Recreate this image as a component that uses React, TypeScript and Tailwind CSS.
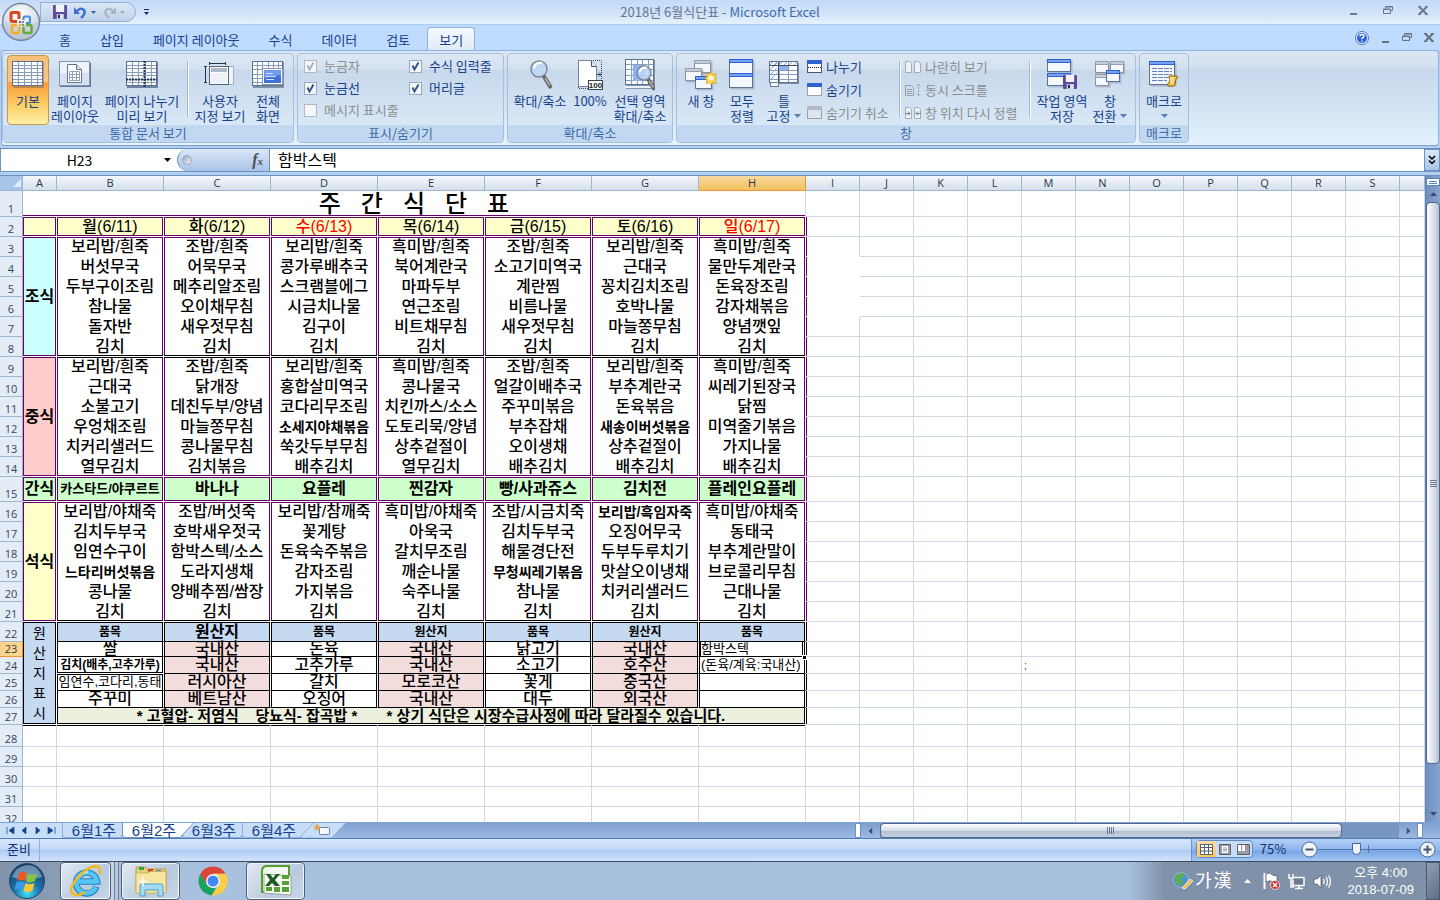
import { useState } from "react";
import type { ReactNode } from "react";

const TABS = ["홈", "삽입", "페이지 레이아웃", "수식", "데이터", "검토", "보기"];
const MEAL_COLUMNS = ["B", "C", "D", "E", "F", "G", "H"];
const EMPTY_COLUMNS = ["I", "J", "K", "L", "M", "N", "O", "P", "Q", "R", "S", ""];
const DAYS = ["월(6/11)", "화(6/12)", "수(6/13)", "목(6/14)", "금(6/15)", "토(6/16)", "일(6/17)"];
const SHEETS = ["6월1주", "6월2주", "6월3주", "6월4주"];

const BREAKFAST = [
  ["보리밥/흰죽", "조밥/흰죽", "보리밥/흰죽", "흑미밥/흰죽", "조밥/흰죽", "보리밥/흰죽", "흑미밥/흰죽"],
  ["버섯무국", "어묵무국", "콩가루배추국", "북어계란국", "소고기미역국", "근대국", "물만두계란국"],
  ["두부구이조림", "메추리알조림", "스크램블에그", "마파두부", "계란찜", "꽁치김치조림", "돈육장조림"],
  ["참나물", "오이채무침", "시금치나물", "연근조림", "비름나물", "호박나물", "감자채볶음"],
  ["돌자반", "새우젓무침", "김구이", "비트채무침", "새우젓무침", "마늘쫑무침", "양념깻잎"],
  ["김치", "김치", "김치", "김치", "김치", "김치", "김치"],
];

const LUNCH = [
  ["보리밥/흰죽", "조밥/흰죽", "보리밥/흰죽", "흑미밥/흰죽", "조밥/흰죽", "보리밥/흰죽", "흑미밥/흰죽"],
  ["근대국", "닭개장", "홍합살미역국", "콩나물국", "얼갈이배추국", "부추계란국", "씨레기된장국"],
  ["소불고기", "데친두부/양념", "코다리무조림", "치킨까스/소스", "주꾸미볶음", "돈육볶음", "닭찜"],
  ["우엉채조림", "마늘쫑무침", "소세지야채볶음", "도토리묵/양념", "부추잡채", "새송이버섯볶음", "미역줄기볶음"],
  ["치커리샐러드", "콩나물무침", "쑥갓두부무침", "상추겉절이", "오이생채", "상추겉절이", "가지나물"],
  ["열무김치", "김치볶음", "배추김치", "열무김치", "배추김치", "배추김치", "배추김치"],
];

const SNACK = ["카스타드/야쿠르트", "바나나", "요플레", "찐감자", "빵/사과쥬스", "김치전", "플레인요플레"];

const DINNER = [
  ["보리밥/야채죽", "조밥/버섯죽", "보리밥/참깨죽", "흑미밥/야채죽", "조밥/시금치죽", "보리밥/흑임자죽", "흑미밥/야채죽"],
  ["김치두부국", "호박새우젓국", "꽃게탕", "아욱국", "김치두부국", "오징어무국", "동태국"],
  ["임연수구이", "함박스텍/소스", "돈육숙주볶음", "갈치무조림", "해물경단전", "두부두루치기", "부추계란말이"],
  ["느타리버섯볶음", "도라지생채", "감자조림", "깨순나물", "무청씨레기볶음", "맛살오이냉채", "브로콜리무침"],
  ["콩나물", "양배추찜/쌈장", "가지볶음", "숙주나물", "참나물", "치커리샐러드", "근대나물"],
  ["김치", "김치", "김치", "김치", "김치", "김치", "김치"],
];

const ORIGIN_HEAD = ["품목", "원산지", "품목", "원산지", "품목", "원산지", "품목"];
const ORIGIN = [
  ["쌀", "국내산", "돈육", "국내산", "닭고기", "국내산", "함박스텍"],
  ["김치(배추,고추가루)", "국내산", "고추가루", "국내산", "소고기", "호주산", "(돈육/계육:국내산)"],
  ["임연수,코다리,동태", "러시아산", "갈치", "모로코산", "꽃게", "중국산", ""],
  ["주꾸미", "베트남산", "오징어", "국내산", "대두", "외국산", ""],
];

// long names are set smaller so that they stay inside the column
const TEXT_SIZE: Record<string, string> = {
  "카스타드/야쿠르트": "text-[13px] font-bold",
  "소세지야채볶음": "text-sm font-bold",
  "새송이버섯볶음": "text-sm font-bold",
  "느타리버섯볶음": "text-sm font-bold",
  "무청씨레기볶음": "text-sm font-bold",
  "보리밥/흑임자죽": "text-sm font-bold",
  "김치(배추,고추가루)": "text-xs font-bold",
  "임연수,코다리,동태": "text-[13px]",
};

const FRAME = {
  sides: "shadow-[inset_1px_0_0_0_#660066,inset_-1px_0_0_0_#660066]",
  top: "shadow-[inset_1px_0_0_0_#660066,inset_-1px_0_0_0_#660066,inset_0_1px_0_0_#660066]",
  bottom: "shadow-[inset_1px_0_0_0_#660066,inset_-1px_0_0_0_#660066,inset_0_-1px_0_0_#660066]",
  topBlack: "shadow-[inset_0_1px_0_0_#000000,inset_1px_0_0_0_#660066,inset_-1px_0_0_0_#660066]",
  bottomBlack: "shadow-[inset_0_-1px_0_0_#000000,inset_1px_0_0_0_#660066,inset_-1px_0_0_0_#660066]",
  box: "shadow-[inset_0_0_0_1px_#660066]",
  boxBlack: "shadow-[inset_0_0_0_1px_#000000]",
  sidesBlack: "shadow-[inset_1px_0_0_0_#000000,inset_-1px_0_0_0_#000000]",
  sidesTopBlack: "shadow-[inset_1px_0_0_0_#000000,inset_-1px_0_0_0_#000000,inset_0_1px_0_0_#000000]",
  sidesBottomBlack: "shadow-[inset_1px_0_0_0_#000000,inset_-1px_0_0_0_#000000,inset_0_-1px_0_0_#000000]",
};

const CELL = "border-r border-white p-0 text-center align-middle whitespace-nowrap leading-[14px]";

/* ---------- icons ---------- */

function Caret({ className = "" }: { className?: string }) {
  return (
    <svg width="7" height="4" viewBox="0 0 7 4" className={className}>
      <path d="M0 0h7L3.5 4z" fill="currentColor" />
    </svg>
  );
}

function WindowShape({ x, y, w, h, gray = false }: { x: number; y: number; w: number; h: number; gray?: boolean }) {
  return (
    <g>
      <rect x={x + 1.5} y={y + 1.5} width={w} height={h} fill="#8fa3bd" opacity="0.6" />
      <rect x={x + 0.5} y={y + 0.5} width={w - 1} height={h - 1} fill="#f4f7fc" stroke={gray ? "#8a8f99" : "#5d7394"} />
      <rect x={x} y={y} width={w} height="4" fill={gray ? "#9aa0ab" : "#2f62cf"} />
      <rect x={x + 1} y={y + 1} width={w - 2} height="2" fill={gray ? "#c8ccd3" : "#7ba2f2"} />
    </g>
  );
}

function GridShape({ x, y, w, h, cols, rows }: { x: number; y: number; w: number; h: number; cols: number; rows: number }) {
  const vertical = Array.from({ length: cols - 1 }, (_, i) => x + Math.round(((i + 1) * w) / cols) + 0.5);
  const horizontal = Array.from({ length: rows - 1 }, (_, i) => y + Math.round(((i + 1) * h) / rows) + 0.5);
  return (
    <g stroke="#8b9cb8">
      <rect x={x + 0.5} y={y + 0.5} width={w - 1} height={h - 1} fill="#fafcff" stroke="#5f7190" />
      {vertical.map((v) => (
        <path key={`v${v}`} d={`M${v} ${y + 1}V${y + h - 1}`} />
      ))}
      {horizontal.map((v) => (
        <path key={`h${v}`} d={`M${x + 1} ${v}H${x + w - 1}`} />
      ))}
    </g>
  );
}

function Magnifier({ x, y, r }: { x: number; y: number; r: number }) {
  return (
    <g>
      <path d={`M${x + r * 0.6} ${y + r * 0.9}l${r * 0.8} ${r * 1.3}`} stroke="#6b6661" strokeWidth="4" strokeLinecap="round" />
      <path d={`M${x + r * 0.8} ${y + r * 1.2}l${r * 0.5} ${r * 0.8}`} stroke="#b9b4ae" strokeWidth="1.5" strokeLinecap="round" />
      <circle cx={x} cy={y} r={r} fill="#bcd6f3" fillOpacity="0.85" stroke="#7c8795" strokeWidth="1.5" />
      <path d={`M${x - r * 0.6} ${y - r * 0.1}a${r * 0.7} ${r * 0.7} 0 0 1 ${r} -${r * 0.6}`} stroke="#fff" strokeWidth="2" fill="none" />
    </g>
  );
}

function Floppy({ x, y, s }: { x: number; y: number; s: number }) {
  return (
    <g>
      <rect x={x} y={y} width={s} height={s} rx="1" fill="#5b4a9e" />
      <rect x={x + s * 0.2} y={y} width={s * 0.6} height={s * 0.5} fill="#f3f4fa" />
      <rect x={x + s * 0.27} y={y + s * 0.65} width={s * 0.5} height={s * 0.35} fill="#e2e2ee" />
      <rect x={x + s * 0.35} y={y + s * 0.7} width={s * 0.15} height={s * 0.25} fill="#2d2a55" />
    </g>
  );
}

function NormalViewIcon() {
  return (
    <svg width="32" height="27" viewBox="0 0 32 27">
      <rect x="1" y="1" width="31" height="26" fill="#7e6a55" opacity="0.5" />
      <GridShape x={0} y={0} w={31} h={25} cols={5} rows={7} />
    </svg>
  );
}

function PageLayoutIcon() {
  return (
    <svg width="32" height="27" viewBox="0 0 32 27">
      <rect x="1" y="2" width="31" height="24" fill="#5f7896" />
      <rect x="0.5" y="0.5" width="30" height="24" fill="#eef3fa" stroke="#8296b4" />
      <rect x="1" y="12" width="29" height="12" fill="#d7e0ee" />
      <path d="M8.5 3.5h9l5 5v13h-14z" fill="#fff" stroke="#66758c" />
      <path d="M17.5 3.5v5h5" fill="#dce4ef" stroke="#66758c" />
      <path d="M10.5 10.5h10v9h-10zM10.5 13.5h10M10.5 16.5h10M13.5 10.5v9M17.5 10.5v9" fill="none" stroke="#93a2b8" />
    </svg>
  );
}

function PageBreakIcon() {
  return (
    <svg width="32" height="27" viewBox="0 0 32 27">
      <rect x="1" y="1" width="31" height="26" fill="#6e83a1" />
      <GridShape x={0} y={0} w={31} h={25} cols={5} rows={7} />
      <path d="M18.5 0v26M0 18.5h31" stroke="#23344f" strokeWidth="2" strokeDasharray="2 1" />
    </svg>
  );
}

function CustomViewIcon() {
  return (
    <svg width="32" height="27" viewBox="0 0 32 27">
      <rect x="20.5" y="5.5" width="9" height="18" fill="#f1f4f9" stroke="#9fb0c8" />
      <rect x="5.5" y="5.5" width="19" height="18" fill="#fff" stroke="#4f627e" />
      <rect x="7" y="7" width="16" height="4" fill="#aeb9ca" />
      <path d="M7 12h16v10H7z" fill="#edf1f7" />
      <path d="M5 2.500h17M5.500 1v3M21.500 1v3M1.500 5v17M0 5.500h3M0 21.500h3" stroke="#23344f" />
    </svg>
  );
}

function FullScreenIcon() {
  return (
    <svg width="32" height="27" viewBox="0 0 32 27">
      <rect x="1" y="1" width="31" height="26" fill="#7d8fab" />
      <GridShape x={0} y={0} w={31} h={25} cols={6} rows={6} />
      <rect x="10.5" y="7.5" width="20" height="16" fill="#fff" stroke="#8598b6" />
      <rect x="12" y="9" width="17" height="13" fill="#3f71d8" />
      <path d="M12 9h17v5l-17 3z" fill="#6f9aee" />
      <path d="M14 12.500h7M14 15.500h10M14 18.500h8" stroke="#cfe0ff" />
    </svg>
  );
}

function ZoomIcon() {
  return (
    <svg width="26" height="32" viewBox="0 0 26 32" fill="none">
      <Magnifier x={12} y={10} r={8} />
    </svg>
  );
}

function HundredIcon() {
  return (
    <svg width="28" height="32" viewBox="0 0 28 32">
      <path d="M2.500 1.500h13l5 6v20h-18z" fill="#fff" stroke="#74839a" />
      <path d="M15.500 1.500v6h5" fill="#e1e8f2" stroke="#44546c" />
      <path d="M17 1.500h8.500V22M2.500 28v1.500H12" fill="none" stroke="#33435a" strokeDasharray="1 1" />
      <path d="M21 15.500h4M23 13.500l2 2-2 2" fill="none" stroke="#33435a" />
      <rect x="12.5" y="21.5" width="14" height="9" fill="#fff" stroke="#33435a" />
      <text x="19.5" y="29" fontSize="8" fontWeight="bold" textAnchor="middle" fontFamily="Liberation Sans, sans-serif" fill="#222">
        100
      </text>
    </svg>
  );
}

function ZoomSelectionIcon() {
  return (
    <svg width="30" height="32" viewBox="0 0 30 32" fill="none">
      <rect x="1" y="1" width="29" height="29" fill="#8295b2" />
      <GridShape x={0} y={0} w={29} h={26} cols={5} rows={5} />
      <rect x="8" y="6" width="12" height="16" fill="#8fb0f3" />
      <path d="M0 27h29v2H0z" fill="#eef2f8" />
      <Magnifier x={19} y={14} r={7} />
    </svg>
  );
}

function NewWindowIcon() {
  return (
    <svg width="32" height="32" viewBox="0 0 32 32">
      <WindowShape x={9} y={1} w={17} h={13} gray />
      <WindowShape x={0} y={9} w={17} h={13} gray />
      <WindowShape x={10} y={17} w={17} h={13} />
      <path d="M26 12l1.500 4 4-1.500-1.500 4 2 1-2 1.500 1.500 3.500-4-1-1.500 2.500-1.500-2.500-3.500 1 1-3.500-2.500-1.500 2.500-1.500-1-3.500 3.500 1z" fill="#ffd84a" stroke="#dc9a12" strokeWidth="0.7" />
      <circle cx="26" cy="19" r="2.5" fill="#fffbe0" />
    </svg>
  );
}

function ArrangeIcon() {
  return (
    <svg width="26" height="31" viewBox="0 0 26 31">
      <WindowShape x={0} y={0} w={24} h={15} />
      <WindowShape x={0} y={14} w={24} h={15} />
    </svg>
  );
}

function FreezeIcon() {
  return (
    <svg width="30" height="27" viewBox="0 0 30 27">
      <rect x="2" y="2" width="28" height="21" fill="#7c8da8" />
      <GridShape x={0} y={0} w={29} h={22} cols={3} rows={5} />
      <path d="M1 4l3-3M5 4l3-3M10 4l3-3M15 4l3-3M20 4l3-3M25 4l3-3M1 9l7-7M1 14l7-7M1 19l7-7" stroke="#8aaaf0" />
      <rect x="10" y="5" width="9" height="4" fill="#8fb0f3" />
      <path d="M9.500 1v24M1 4.500h28" stroke="#3d4d66" />
      <rect x="1.5" y="21.5" width="8" height="4" fill="#f2f5fa" stroke="#6d7e98" />
    </svg>
  );
}

function SaveWorkspaceIcon() {
  return (
    <svg width="31" height="32" viewBox="0 0 31 32">
      <WindowShape x={0} y={0} w={24} h={13} />
      <WindowShape x={0} y={14} w={24} h={13} />
      <Floppy x={16} y={16} s={14} />
    </svg>
  );
}

function SwitchWindowsIcon() {
  return (
    <svg width="30" height="27" viewBox="0 0 30 27">
      <WindowShape x={0} y={0} w={14} h={12} gray />
      <WindowShape x={15} y={0} w={14} h={12} gray />
      <WindowShape x={0} y={13} w={14} h={12} gray />
      <WindowShape x={11} y={9} w={14} h={12} />
    </svg>
  );
}

function MacroIcon() {
  return (
    <svg width="30" height="27" viewBox="0 0 30 27">
      <WindowShape x={0} y={0} w={26} h={24} />
      <path d="M3 7.500h20M3 10.500h20M3 13.500h20M3 16.500h16M3 19.500h15" stroke="#5e7fb6" strokeDasharray="5 1" />
      <path d="M20 15h8q2 2-1 3l-1 6q-1 2-7 1-2-2 1-3l1-4q-2-1-1-3z" fill="#e9b93f" stroke="#94660f" />
      <path d="M21 16h5l-2 7h-3z" fill="#f9dd85" />
    </svg>
  );
}

function SmallWindowIcon({ kind }: { kind: string }) {
  if (kind === "compare" || kind === "scroll" || kind === "reset") {
    return (
      <svg width="16" height="14" viewBox="0 0 16 14" className="shrink-0">
        {kind !== "scroll" && (
          <g fill="#eef1f6" stroke="#a3acba">
            <path d="M.5 1.500h4l2 2v9h-6zM9.500 1.500h4l2 2v9h-6z" />
            {kind === "reset" && <path d="M0 7.500h5M3 5.500l2 2-2 2M16 7.500h-5M13 5.500l-2 2 2 2" stroke="#747d8b" fill="none" />}
          </g>
        )}
        {kind === "scroll" && (
          <g fill="none" stroke="#98a1af">
            <path d="M.5 2.500h6l2 2v8h-8zM2 6.500h5M2 8.500h5M2 10.500h5" />
            <path d="M13.500 1v12M11.500 3l2-2 2 2M11.500 11l2 2 2-2" strokeDasharray="2 1" />
          </g>
        )}
      </svg>
    );
  }
  return (
    <svg width="15" height="13" viewBox="0 0 15 13" className="shrink-0">
      <rect x="0.5" y="0.5" width="14" height="12" fill="#fff" stroke={kind === "unhide" ? "#98a1af" : "#46597a"} strokeDasharray={kind === "hide" ? "1 1" : undefined} />
      <rect width="15" height="4" fill={kind === "unhide" ? "#b4bac5" : "#2f62cf"} />
      {kind === "split" && <path d="M1 7.500h13" stroke="#222" strokeDasharray="1 1" />}
      {kind === "unhide" && <rect x="1" y="4" width="13" height="8" fill="#dfe5ee" />}
    </svg>
  );
}

function MinimizeIcon() {
  return (
    <svg width="9" height="12" viewBox="0 0 9 12">
      <path d="M1 9h7v2H1z" fill="currentColor" />
    </svg>
  );
}

function RestoreIcon() {
  return (
    <svg width="10" height="9" viewBox="0 0 10 9" fill="none" stroke="currentColor">
      <path d="M2.500 2.500v-2h7v4h-2M2 1h8" />
      <path d="M.5 3h7v4.500h-7zM0 3.500h8" />
    </svg>
  );
}

function CloseIcon() {
  return (
    <svg width="10" height="9" viewBox="0 0 10 9" fill="none" stroke="currentColor" strokeWidth="2">
      <path d="M1 .5l8 8M9 .5l-8 8" />
      <path d="M0 .5h3M7 .5h3M0 8.500h3M7 8.500h3" strokeWidth="1" />
    </svg>
  );
}

function OfficeLogo() {
  return (
    <svg width="40" height="40" viewBox="0 0 40 40" fill="none">
      <defs>
        <radialGradient id="orb" cx="0.5" cy="0.3" r="0.75">
          <stop offset="0" stopColor="#ffffff" />
          <stop offset="0.55" stopColor="#dbe1ea" />
          <stop offset="1" stopColor="#a5b2c6" />
        </radialGradient>
      </defs>
      <circle cx="20" cy="20" r="18.5" fill="url(#orb)" stroke="#75879f" strokeWidth="1.5" />
      <path d="M3 20q17 5 34 0q-2 15-17 16.500Q5 35 3 20z" fill="#bcc9db" opacity="0.6" />
      <path d="M18 17v-5q0-1.500-1.500-1.500h-5q-1.500 0-1.500 1.500v6q0 1.500 1.500 1.500H16" stroke="#d9481c" strokeWidth="3" />
      <path d="M22.500 18v-2q0-1.500 1.500-1.500h3.500q1.500 0 1.500 1.500v3.500q0 1.500-1.500 1.500H25" stroke="#4a93d9" strokeWidth="2.2" />
      <path d="M18 25v4.500q0 1.500-1.500 1.500h-4q-1.500 0-1.500-1.500v-5q0-1.500 1.500-1.500H16" stroke="#f3b01f" strokeWidth="2.5" />
      <path d="M22.500 25v4.500q0 1.500 1.500 1.500h5q1.500 0 1.500-1.500v-5q0-1.500-1.500-1.500H25" stroke="#66a83a" strokeWidth="2.5" />
      <path d="M18 19h2v2h-2z" fill="#d9481c" />
      <path d="M21 19h2v2h-2z" fill="#4a93d9" />
      <path d="M18 22h2v2h-2z" fill="#f3b01f" />
      <path d="M21 22h2v2h-2z" fill="#66a83a" />
    </svg>
  );
}

/* ---------- ribbon ---------- */

function RibbonGroup({ label, children }: { label: string; children: ReactNode }) {
  return (
    <section className="flex h-[90px] shrink-0 flex-col overflow-hidden rounded-sm border border-[#a5c0dc] bg-[linear-gradient(#dce7f4_0,#d5e1f0_15px,#c8d8ec_16px,#d9e8f6_72px)]">
      <div className="flex flex-1 items-start px-1 pt-px">{children}</div>
      <h2 className="h-[17px] bg-[#c1d8f0] text-center text-[13px] leading-4 text-[#3e6aaa]">{label}</h2>
    </section>
  );
}

interface BigButtonProps {
  icon: ReactNode;
  lines: string[];
  width: string;
  active?: boolean;
  caret?: boolean;
}

function BigButton({ icon, lines, width, active = false, caret = false }: BigButtonProps) {
  return (
    <button
      type="button"
      className={`flex h-[70px] shrink-0 flex-col items-center rounded-sm border text-[13px] leading-[15px] whitespace-nowrap text-[#15428b] ${width} ${
        active
          ? "border-[#c29a4b] bg-[linear-gradient(#f6c078_0,#fbc48a_25px,#fd9d3b_27px,#fdd067_50px,#fff0a8_100%)]"
          : "border-transparent"
      }`}
    >
      <span className="flex h-[37px] items-center justify-center">{icon}</span>
      {lines.map((line, i) => (
        <span key={line} className="flex h-[15px] items-center gap-1">
          {line}
          {caret && i === lines.length - 1 && <Caret className="text-[#5b7fb8]" />}
        </span>
      ))}
    </button>
  );
}

function Separator() {
  return <div className="mx-1 mt-1.5 h-14 w-0.5 shrink-0 border-l border-[#9fb8d6] bg-white" />;
}

function RibbonCheck({ label, checked = false, disabled = false }: { label: string; checked?: boolean; disabled?: boolean }) {
  const [on, setOn] = useState(checked);
  return (
    <label className={`flex items-center gap-[7px] text-[13px] whitespace-nowrap ${disabled ? "text-[#8d8d8d]" : "text-[#15428b]"}`}>
      <span className="relative flex">
        <input
          type="checkbox"
          checked={on}
          disabled={disabled}
          onChange={() => setOn(!on)}
          className={`h-[13px] w-[13px] appearance-none border bg-[#f4f6f9] ${disabled ? "border-[#b1b8c2]" : "border-[#98a9c2]"}`}
        />
        {on && (
          <svg width="13" height="13" viewBox="0 0 13 13" className="pointer-events-none absolute inset-0">
            <path d="M3.500 5.500l2 4 4-7" fill="none" strokeWidth="2" stroke={disabled ? "#a9b3c2" : "#33558f"} />
          </svg>
        )}
      </span>
      {label}
    </label>
  );
}

function SmallButton({ kind, label, disabled = false }: { kind: string; label: string; disabled?: boolean }) {
  return (
    <button
      type="button"
      disabled={disabled}
      className={`flex h-[23px] items-center gap-1 text-[13px] whitespace-nowrap ${disabled ? "text-[#8d8d8d]" : "text-[#15428b]"}`}
    >
      <SmallWindowIcon kind={kind} />
      {label}
    </button>
  );
}

function Ribbon() {
  return (
    <div className="mx-px flex h-24 shrink-0 items-start gap-[3px] overflow-hidden rounded border border-[#8db2e3] border-b-[#7f9fc6] bg-[linear-gradient(#dbe6f4_0,#d3e0f0_16px,#c8d8ed_18px,#d5e6f5_65px,#e3f4ff_100%)] pt-0.5">
      <RibbonGroup label="통합 문서 보기">
        <BigButton icon={<NormalViewIcon />} lines={["기본"]} width="w-[42px]" active />
        <BigButton icon={<PageLayoutIcon />} lines={["페이지", "레이아웃"]} width="w-[52px]" />
        <BigButton icon={<PageBreakIcon />} lines={["페이지 나누기", "미리 보기"]} width="w-[82px]" />
        <Separator />
        <BigButton icon={<CustomViewIcon />} lines={["사용자", "지정 보기"]} width="w-[54px]" />
        <BigButton icon={<FullScreenIcon />} lines={["전체", "화면"]} width="w-[42px]" />
      </RibbonGroup>
      <RibbonGroup label="표시/숨기기">
        <div className="grid auto-rows-[22px] grid-cols-[105px_90px] pl-0.5">
          <RibbonCheck label="눈금자" checked disabled />
          <RibbonCheck label="수식 입력줄" checked />
          <RibbonCheck label="눈금선" checked />
          <RibbonCheck label="머리글" checked />
          <RibbonCheck label="메시지 표시줄" disabled />
        </div>
      </RibbonGroup>
      <RibbonGroup label="확대/축소">
        <BigButton icon={<ZoomIcon />} lines={["확대/축소"]} width="w-[56px]" />
        <BigButton icon={<HundredIcon />} lines={["100%"]} width="w-[44px]" />
        <BigButton icon={<ZoomSelectionIcon />} lines={["선택 영역", "확대/축소"]} width="w-[56px]" />
      </RibbonGroup>
      <RibbonGroup label="창">
        <BigButton icon={<NewWindowIcon />} lines={["새 창"]} width="w-10" />
        <BigButton icon={<ArrangeIcon />} lines={["모두", "정렬"]} width="w-[42px]" />
        <BigButton icon={<FreezeIcon />} lines={["틀", "고정"]} width="w-[42px]" caret />
        <div className="flex w-[90px] flex-col pl-0.5">
          <SmallButton kind="split" label="나누기" />
          <SmallButton kind="hide" label="숨기기" />
          <SmallButton kind="unhide" label="숨기기 취소" disabled />
        </div>
        <Separator />
        <div className="flex w-[120px] flex-col">
          <SmallButton kind="compare" label="나란히 보기" disabled />
          <SmallButton kind="scroll" label="동시 스크롤" disabled />
          <SmallButton kind="reset" label="창 위치 다시 정렬" disabled />
        </div>
        <Separator />
        <BigButton icon={<SaveWorkspaceIcon />} lines={["작업 영역", "저장"]} width="w-[54px]" />
        <BigButton icon={<SwitchWindowsIcon />} lines={["창", "전환"]} width="w-[42px]" caret />
      </RibbonGroup>
      <RibbonGroup label="매크로">
        <BigButton icon={<MacroIcon />} lines={["매크로", ""]} width="w-10" caret />
      </RibbonGroup>
    </div>
  );
}

/* ---------- title and tabs ---------- */

function TitleBar() {
  return (
    <header className="flex h-[25px] shrink-0 items-center border-b border-[#a9cbf5] bg-[linear-gradient(#c3daf7_0,#d3e4f9_60%,#e6f1fd_100%)]">
      <div className="flex flex-1 items-center pl-10">
        <div className="flex h-5 items-center gap-[7px] rounded-r-full border border-[#93aed3] bg-[linear-gradient(#dbe7f6,#bfd2ea)] pr-2.5 pl-3">
          <button type="button" aria-label="저장">
            <svg width="14" height="14" viewBox="0 0 14 14">
              <Floppy x={0} y={0} s={14} />
            </svg>
          </button>
          <button type="button" aria-label="실행 취소" className="flex items-center gap-1 text-[#3c5f9b]">
            <svg width="13" height="13" viewBox="0 0 13 13" fill="none">
              <path d="M2 6.500q4-6 8-2.500 2 4-3 8" stroke="#3f6fd1" strokeWidth="2.5" />
              <path d="M0 1v7h6z" fill="#3f6fd1" />
            </svg>
            <svg width="5" height="3" viewBox="0 0 5 3">
              <path d="M0 0h5L2.500 3z" fill="currentColor" />
            </svg>
          </button>
          <button type="button" aria-label="다시 실행" className="flex items-center gap-1 text-[#a3acb9]">
            <svg width="13" height="13" viewBox="0 0 13 13" fill="none">
              <path d="M11 6.500q-4-6-8-2.500-2 4 3 8" stroke="#a8b5c8" strokeWidth="2.5" />
              <path d="M13 1v7H7z" fill="#a8b5c8" />
            </svg>
            <svg width="5" height="3" viewBox="0 0 5 3">
              <path d="M0 0h5L2.500 3z" fill="currentColor" />
            </svg>
          </button>
        </div>
        <button type="button" aria-label="사용자 지정" className="ml-2 flex flex-col items-center gap-0.5 text-[#15305f]">
          <span className="h-px w-[5px] bg-[#15305f]" />
          <svg width="5" height="3" viewBox="0 0 5 3">
            <path d="M0 0h5L2.500 3z" fill="currentColor" />
          </svg>
        </button>
      </div>
      <h1 className="text-[13px] leading-5 whitespace-nowrap text-[#66758c]">
        2018년 6월식단표 - <span className="text-[#3e6aaa]">Microsoft Excel</span>
      </h1>
      <div className="flex flex-1 items-center justify-end gap-[25px] pr-3 pb-1 pl-7 text-[#6c7a90]">
        <button type="button" aria-label="최소화"><MinimizeIcon /></button>
        <button type="button" aria-label="이전 크기로"><RestoreIcon /></button>
        <button type="button" aria-label="닫기"><CloseIcon /></button>
      </div>
    </header>
  );
}

function TabBar({ active, onSelect }: { active: string; onSelect: (tab: string) => void }) {
  return (
    <nav className="flex h-[25px] shrink-0 items-end bg-[#bfdbff] pl-[47px]">
      <div className="flex flex-1 gap-[5px]">
        {TABS.map((tab) => (
          <button
            key={tab}
            type="button"
            onClick={() => onSelect(tab)}
            className={`-mb-px h-6 rounded-t border border-b-0 px-[11px] text-[13px] leading-[21px] whitespace-nowrap text-[#15428b] ${
              tab === active ? "border-[#8db2e3] bg-[linear-gradient(#f5faff,#dfeaf7)]" : "border-transparent"
            }`}
          >
            {tab}
          </button>
        ))}
      </div>
      <div className="flex h-full items-center gap-3 pr-1.5 text-[#666f7c]">
        <button type="button" aria-label="도움말">
          <svg width="14" height="14" viewBox="0 0 14 14">
            <circle cx="7" cy="7" r="6.5" fill="#eaf2ff" stroke="#4d73b8" />
            <circle cx="7" cy="7" r="5" fill="#2a62d8" />
            <path d="M5 5.500q0-2 2-2t2 1.700q0 1-1.200 1.500T7 8.300M7 9.500v1.300" fill="none" stroke="#fff" strokeWidth="1.4" />
          </svg>
        </button>
        <button type="button" aria-label="창 최소화"><MinimizeIcon /></button>
        <button type="button" aria-label="창 이전 크기로"><RestoreIcon /></button>
        <button type="button" aria-label="창 닫기"><CloseIcon /></button>
      </div>
    </nav>
  );
}

function FormulaBar() {
  return (
    <div className="mt-0.5 mb-[3px] flex h-6 shrink-0 items-stretch border-y border-[#6a93c4] bg-white">
      <div className="flex w-[177px] shrink-0 items-center border-l border-[#6a93c4] pr-1.5">
        <input aria-label="이름 상자" defaultValue="H23" className="min-w-0 flex-1 bg-transparent pr-1.5 text-center text-sm text-black outline-none" />
        <Caret className="text-black" />
      </div>
      <div className="flex w-[93px] shrink-0 items-center justify-between rounded-l-full border-r border-l border-[#6a93c4] bg-[linear-gradient(#dce8f8,#a9c3e8)] pr-1.5 pl-1">
        <span className="h-2.5 w-2.5 rounded-full border border-[#98a9c2] bg-[linear-gradient(135deg,#98a5b9,#f3f6fa)]" />
        <button type="button" aria-label="함수 삽입" className="font-['Liberation_Serif',serif] text-base leading-5 font-bold text-[#4a4f58] italic">
          f<span className="text-[11px]">x</span>
        </button>
      </div>
      <input aria-label="수식 입력줄" defaultValue="함박스텍" className="min-w-0 flex-1 px-2 pb-0.5 text-base leading-5 text-black outline-none" />
      <button type="button" aria-label="수식 입력줄 확장" className="flex w-4 items-center justify-center border border-[#6a93c4] bg-[linear-gradient(#dce8f8,#a9c3e8)]">
        <svg width="8" height="10" viewBox="0 0 8 10" fill="none" stroke="#000" strokeWidth="1.5">
          <path d="M1 1l3 3 3-3M1 5.500l3 3 3-3" />
        </svg>
      </button>
    </div>
  );
}

/* ---------- sheet ---------- */

function tableEdge(row: number) {
  if (row >= 2 && row <= 21) return "shadow-[inset_1px_0_0_0_#660066]";
  if (row >= 22 && row <= 27) return "shadow-[inset_1px_0_0_0_#000000]";
  return "";
}

function SheetRow({ row, height, children }: { row: number; height: string; children?: ReactNode }) {
  return (
    <tr className={height}>
      <th
        scope="row"
        className={`border-r border-b p-0 text-center align-bottom font-['Open_Sans',sans-serif] text-[11px] leading-[14px] font-normal ${
          row === 23 ? "border-[#f29436] bg-[#ffd58d] text-[#2a3b4f]" : "border-[#9eb6ce] bg-[#e4ecf7] text-[#33475f]"
        }`}
      >
        {row}
      </th>
      {children}
      {EMPTY_COLUMNS.map((col) => {
        const plainBottom = col === "I" && row >= 3 && row <= 6;
        const plainRight = col === "I" && row >= 4 && row <= 6;
        return (
          <td
            key={col}
            className={`border-r border-b p-0 pl-0.5 text-left align-middle text-[11px] leading-[14px] text-[#7a3b20] ${
              plainBottom ? "border-b-white" : "border-b-[#d0d7e5]"
            } ${plainRight ? "border-r-white" : "border-r-[#d0d7e5]"} ${col === "I" ? tableEdge(row) : ""}`}
          >
            {col === "M" && row === 24 ? ";" : ""}
          </td>
        );
      })}
    </tr>
  );
}

interface MealRowsProps {
  start: number;
  title: string;
  color: string;
  rows: string[][];
  first: string;
  last: string;
}

function MealRows({ start, title, color, rows, first, last }: MealRowsProps) {
  return (
    <>
      {rows.map((dishes, i) => {
        const isLast = i === rows.length - 1;
        const frame = i === 0 ? first : isLast ? last : FRAME.sides;
        return (
          <SheetRow key={i} row={start + i} height="h-5">
            {i === 0 && (
              <td rowSpan={rows.length} className={`${CELL} border-b ${FRAME.box} ${color} bg-clip-padding text-base font-bold`}>
                {title}
              </td>
            )}
            {dishes.map((dish, c) => (
              <td key={c} className={`${CELL} ${isLast ? "border-b" : ""} ${frame} ${TEXT_SIZE[dish] || "text-base font-medium"}`}>
                {dish}
              </td>
            ))}
          </SheetRow>
        );
      })}
    </>
  );
}

function OriginCell({ text, row, col }: { text: string; row: number; col: number }) {
  const isOrigin = col % 2 === 1;
  const split = col === 0 && row === 1;
  const frame = split ? FRAME.sidesBottomBlack : col === 0 && row === 2 ? FRAME.sidesTopBlack : FRAME.sidesBlack;
  const size = col === 6 ? "text-[13px]" : TEXT_SIZE[text] || "text-base font-medium";
  return (
    <td
      className={`border-r border-b border-r-white p-0 leading-[14px] whitespace-nowrap ${split ? "border-b-white" : "border-b-black"} ${frame} ${size} ${
        isOrigin ? "bg-[#f2dddc] bg-clip-padding" : ""
      } ${col === 6 ? "pl-0.5 text-left" : "text-center"}`}
    >
      {col === 6 && row === 0 ? (
        <div className="relative">
          {text}
          <span className="pointer-events-none absolute -top-px right-0.5 -bottom-px left-0 -ml-px border border-black" />
          <span className="absolute -right-0.5 -bottom-1 h-[5px] w-[5px] border border-white bg-black" />
        </div>
      ) : (
        text
      )}
    </td>
  );
}

function Sheet() {
  return (
    <table className="w-full table-fixed border-separate border-spacing-0 font-['Liberation_Sans','Noto_Sans_CJK_KR',sans-serif] text-black">
      <colgroup>
        <col className="w-[23px]" />
        <col className="w-[34px]" />
        {MEAL_COLUMNS.map((c) => (
          <col key={c} className="w-[107px]" />
        ))}
        {EMPTY_COLUMNS.map((c) => (
          <col key={c} className={c ? "w-[54px]" : ""} />
        ))}
      </colgroup>
      <thead>
        <tr className="h-[15px]">
          <th className="border-r border-b border-[#9eb6ce] bg-[#a9c4e9] p-0">
            <svg width="9" height="9" viewBox="0 0 9 9" className="ml-auto">
              <path d="M8 0v8H0z" fill="#dfeafa" />
            </svg>
          </th>
          {["A", ...MEAL_COLUMNS, ...EMPTY_COLUMNS].map((c) => (
            <th
              key={c}
              scope="col"
              className={`border-r border-b p-0 text-center font-['Open_Sans',sans-serif] text-[11px] leading-[14px] font-normal text-[#27374b] ${
                c === "H"
                  ? "border-[#f29436] bg-[linear-gradient(#f9d99f,#f1c15f)]"
                  : "border-[#9eb6ce] bg-[linear-gradient(#f6f9fd,#d5deea)]"
              }`}
            >
              {c}
            </th>
          ))}
        </tr>
      </thead>
      <tbody>
        <SheetRow row={1} height="h-[26px]">
          <td
            colSpan={8}
            className="border-r border-b border-r-[#d0d7e5] border-b-white p-0 text-center text-2xl leading-[25px] font-medium whitespace-pre shadow-[inset_0_-1px_0_0_#660066]"
          >
            {"주   간   식   단   표"}
          </td>
        </SheetRow>
        <SheetRow row={2} height="h-5">
          <td className={`${CELL} border-b ${FRAME.box} bg-[#ffffcc] bg-clip-padding`} />
          {DAYS.map((day, i) => (
            <td
              key={day}
              className={`${CELL} border-b ${FRAME.box} bg-[#ffffcc] bg-clip-padding text-base font-medium ${i === 2 || i === 6 ? "text-[#ff0000]" : ""}`}
            >
              {day}
            </td>
          ))}
        </SheetRow>
        <MealRows start={3} title="조식" color="bg-[#ccffff]" rows={BREAKFAST} first={FRAME.top} last={FRAME.bottomBlack} />
        <MealRows start={9} title="중식" color="bg-[#ffcccc]" rows={LUNCH} first={FRAME.topBlack} last={FRAME.bottom} />
        <SheetRow row={15} height="h-[25px]">
          <td className={`${CELL} border-b ${FRAME.box} bg-[#ccffcc] bg-clip-padding text-base font-bold`}>간식</td>
          {SNACK.map((snack) => (
            <td key={snack} className={`${CELL} border-b ${FRAME.box} bg-[#ccffcc] bg-clip-padding ${TEXT_SIZE[snack] || "text-base font-bold"}`}>
              {snack}
            </td>
          ))}
        </SheetRow>
        <MealRows start={16} title="석식" color="bg-[#ffffcc]" rows={DINNER} first={FRAME.top} last={FRAME.bottomBlack} />
        <SheetRow row={22} height="h-5">
          <td rowSpan={6} className={`${CELL} border-b ${FRAME.boxBlack} bg-[#c5d9f1] bg-clip-padding`}>
            {["원", "산", "지", "표", "시"].map((c) => (
              <div key={c} className="text-sm leading-5">
                {c}
              </div>
            ))}
          </td>
          {ORIGIN_HEAD.map((head, i) => (
            <td
              key={i}
              className={`border-r border-b border-r-white border-b-black p-0 text-center leading-[14px] font-bold ${FRAME.sidesTopBlack} bg-[#c5d9f1] bg-clip-padding ${
                i === 1 ? "text-base" : "text-xs"
              }`}
            >
              {head}
            </td>
          ))}
        </SheetRow>
        {ORIGIN.map((items, r) => (
          <SheetRow key={r} row={23 + r} height={r === 0 ? "h-[15px]" : "h-[17px]"}>
            {items.map((item, c) => (
              <OriginCell key={c} text={item} row={r} col={c} />
            ))}
          </SheetRow>
        ))}
        <SheetRow row={27} height="h-[17px]">
          <td colSpan={7} className={`border-r border-b border-white p-0 text-center text-[15px] leading-[14px] font-bold whitespace-pre ${FRAME.sidesBottomBlack} bg-[#ebf1de] bg-clip-padding`}>
            {"* 고혈압- 저염식    당뇨식- 잡곡밥 *       * 상기 식단은 시장수급사정에 따라 달라질수 있습니다."}
          </td>
        </SheetRow>
        {[28, 29, 30, 31, 32].map((row) => (
          <SheetRow key={row} row={row} height={row === 28 ? "h-[22px]" : "h-5"}>
            {["A", ...MEAL_COLUMNS].map((c) => (
              <td key={c} className={`border-r border-b border-[#d0d7e5] p-0 ${row === 28 ? "shadow-[inset_0_1px_0_0_#000000]" : ""}`} />
            ))}
          </SheetRow>
        ))}
      </tbody>
    </table>
  );
}

function VerticalScroll() {
  return (
    <div className="flex w-[15px] shrink-0 flex-col items-center border-l border-[#6485b5] bg-[linear-gradient(90deg,#6f8fc0,#86a4cf)]">
      <div className="mt-0.5 flex h-2 w-full items-center justify-center border border-[#5a86bd] bg-white">
        <span className="h-[3px] w-2 border-y border-[#5a86bd]" />
      </div>
      <button type="button" aria-label="위로" className="flex h-4 items-center text-[#3b4a70]">
        <Caret className="rotate-180" />
      </button>
      <div className="flex h-[87%] w-full flex-col items-center justify-center gap-px rounded-sm border border-[#52658b] bg-[linear-gradient(90deg,#ffffff,#dde4ee_50%,#b4c1d3)]">
        {[0, 1, 2, 3].map((i) => (
          <span key={i} className="h-px w-[7px] bg-[#6b7890]" />
        ))}
      </div>
      <button type="button" aria-label="아래로" className="mt-auto flex h-4 items-center text-[#3b4a70]">
        <Caret />
      </button>
    </div>
  );
}

function SheetTabs({ active, onSelect }: { active: string; onSelect: (sheet: string) => void }) {
  return (
    <div className="flex h-[17px] shrink-0 border-t border-b border-[#7fa6dc] border-b-[#4f7db8] bg-[linear-gradient(#7f9fd1,#9db9e2)]">
      <div className="flex min-w-0 flex-1">
        <div className="flex w-[62px] shrink-0 items-center justify-around bg-[#c8ddf8] px-1 text-[#15428b]">
          {["M1 0v7M8 0v7L3 3.500z", "M6 0v7L2 3.500z", "M3 0v7l4-3.500z", "M8 0v7M1 0v7l5-3.500z"].map((d) => (
            <button key={d} type="button" aria-label="시트 이동">
              <svg width="9" height="7" viewBox="0 0 9 7">
                <path d={d} fill="currentColor" stroke="currentColor" strokeWidth="0.7" />
              </svg>
            </button>
          ))}
        </div>
        {SHEETS.map((sheet) => (
          <button
            key={sheet}
            type="button"
            onClick={() => onSelect(sheet)}
            className="relative flex w-[60px] shrink-0 items-center justify-center font-['Liberation_Sans','Noto_Sans_CJK_KR',sans-serif] text-[15px] leading-[14px] whitespace-nowrap text-[#15428b]"
          >
            <svg width="72" height="15" viewBox="0 0 72 15" className={`absolute top-0 left-0 ${sheet === active ? "z-10" : ""}`}>
              <path d="M0 0h72L58 14.500H3L0 12z" fill={sheet === active ? "#ffffff" : "#c8ddf8"} />
              <path d="M71.500 0L58 14.500H3L.5 12V0" fill="none" stroke={sheet === active ? "#6f93c4" : "#8fb0df"} />
            </svg>
            <span className="relative z-20 pl-1">{sheet}</span>
          </button>
        ))}
        <button type="button" aria-label="워크시트 삽입" className="relative">
          <svg width="44" height="15" viewBox="0 0 44 15">
            <path d="M0 0h44L30 14.500H0z" fill="#c8ddf8" />
            <path d="M43.500 0L30 14.500M11.500 0L0 12" fill="none" stroke="#8fb0df" />
            <rect x="17.5" y="4.500" width="10" height="7" rx="1" fill="#f4f8ff" stroke="#6a7fa6" />
            <path d="M15 1v7M11.500 4.500h7M12.500 2l5 5M17.500 2l-5 5" stroke="#e39b1b" />
          </svg>
        </button>
      </div>
      <div className="flex w-[585px] shrink-0 items-stretch">
        <span className="w-1.5 border border-[#6b93c8] bg-white" />
        <button type="button" aria-label="왼쪽" className="flex w-[19px] items-center justify-center text-[#3b4a70]">
          <Caret className="rotate-90" />
        </button>
        <div className="flex flex-1 bg-[#7896c2]">
          <div className="flex w-[89%] items-center justify-center gap-px rounded-sm border border-[#52658b] bg-[linear-gradient(#ffffff,#d3dce8_50%,#b1bfd1_55%,#c6d2e1)]">
            {[0, 1, 2, 3].map((i) => (
              <span key={i} className="h-[7px] w-px bg-[#6b7890]" />
            ))}
          </div>
        </div>
        <button type="button" aria-label="오른쪽" className="flex w-[18px] items-center justify-center text-[#3b4a70]">
          <Caret className="-rotate-90" />
        </button>
        <span className="mr-[17px] w-1.5 border border-[#6b93c8] bg-white" />
      </div>
    </div>
  );
}

function StatusBar() {
  const [zoom, setZoom] = useState(37);
  return (
    <footer className="flex h-[22px] shrink-0 items-stretch bg-[linear-gradient(#d6e6fb_0,#c2d9f7_45%,#aecbf3_50%,#d0e3fb_100%)] text-[13px] leading-5 text-[#15306e]">
      <div className="flex w-10 items-center border-r border-[#8db0de] pb-0.5 pl-[7px]">준비</div>
      <div className="flex-1" />
      <div className="flex items-center border-l border-[#6d95cc] bg-[linear-gradient(#b3d0f7_0,#8fb5ec_50%,#7aa5e5_55%,#a5c6f3_100%)] px-1 pb-0.5">
        <div className="flex h-[18px] rounded-sm border border-[#5f8ac6] bg-[#c8dcf6]">
          <button type="button" aria-label="기본 보기" className="flex w-[19px] items-center justify-center bg-[linear-gradient(#fbd9a5,#fdc95a)]">
            <svg width="13" height="11" viewBox="0 0 13 11">
              <path d="M.5.5h12v10H.5zM.5 3.500h12M.5 7h12M4.500.5v10M8.500.5v10" fill="#fff" stroke="#56606f" />
            </svg>
          </button>
          <button type="button" aria-label="페이지 레이아웃 보기" className="flex w-[18px] items-center justify-center">
            <svg width="12" height="11" viewBox="0 0 12 11">
              <path d="M.5.5h11v10H.5z" fill="#9b9da1" stroke="#56606f" />
              <path d="M3 2h6v7H3z" fill="#fff" />
              <path d="M4 4h4M4 5.500h4M4 7h4" stroke="#777" strokeWidth="0.7" />
            </svg>
          </button>
          <button type="button" aria-label="페이지 나누기 미리 보기" className="flex w-[18px] items-center justify-center">
            <svg width="13" height="11" viewBox="0 0 13 11">
              <path d="M.5.5h12v10H.5z" fill="#9b9da1" stroke="#56606f" />
              <path d="M1 1h3v6H1zM5 1h3v6H5z" fill="#fff" />
            </svg>
          </button>
        </div>
        <span className="w-12 pr-2 text-center">75%</span>
        <button type="button" aria-label="축소">
          <svg width="17" height="17" viewBox="0 0 17 17">
            <circle cx="8.5" cy="8.5" r="7.5" fill="#eef3fa" stroke="#4a668f" />
            <path d="M4.500 8.500h8" stroke="#4a566b" strokeWidth="2" />
          </svg>
        </button>
        <input
          type="range"
          aria-label="확대/축소 비율"
          value={zoom}
          onChange={(e) => setZoom(Number(e.target.value))}
          className="h-4 w-[101px] appearance-none bg-[linear-gradient(#4e75b0,#4e75b0),linear-gradient(#4e75b0,#4e75b0)] bg-[length:100%_1px,1px_8px] bg-center bg-no-repeat [&::-webkit-slider-thumb]:h-3 [&::-webkit-slider-thumb]:w-[9px] [&::-webkit-slider-thumb]:appearance-none [&::-webkit-slider-thumb]:rounded-b-full [&::-webkit-slider-thumb]:border [&::-webkit-slider-thumb]:border-[#4a668f] [&::-webkit-slider-thumb]:bg-[#eef3fa]"
        />
        <button type="button" aria-label="확대">
          <svg width="17" height="17" viewBox="0 0 17 17">
            <circle cx="8.5" cy="8.5" r="7.5" fill="#eef3fa" stroke="#4a668f" />
            <path d="M4.500 8.500h8M8.500 4.500v8" stroke="#4a566b" strokeWidth="2" />
          </svg>
        </button>
      </div>
    </footer>
  );
}

/* ---------- taskbar ---------- */

const TASK_BUTTON =
  "flex h-full items-center justify-center rounded-sm border border-[#4c5f78] bg-[linear-gradient(135deg,#e3ebf4,#b9c9dd_60%,#c9d7e8)] shadow-[inset_0_0_0_1px_#f2f6fb]";

function Taskbar() {
  return (
    <div className="flex h-[39px] shrink-0 items-center border-t border-[#3e4c60] bg-[linear-gradient(90deg,#8093ab_0,#8a9db6_60px,#a8c1de_70px,#a6bfdc_calc(100%-310px),#8092a9_calc(100%-275px),#8092a9_100%)]">
      <button type="button" aria-label="시작" className="mr-3.5 ml-2 shrink-0">
        <svg width="38" height="38" viewBox="0 0 38 38">
          <defs>
            <radialGradient id="start" cx="0.5" cy="0.85" r="0.8">
              <stop offset="0" stopColor="#3fe0fb" />
              <stop offset="0.45" stopColor="#1c75ad" />
              <stop offset="1" stopColor="#163c66" />
            </radialGradient>
          </defs>
          <circle cx="19" cy="19" r="17.5" fill="url(#start)" stroke="#24486e" />
          <path d="M4 15Q8 4 19 3t15 12q-15 5-30 0z" fill="#b5d3ea" opacity="0.5" />
          <path d="M11 11q4-3 8 0l-2 8q-4-2-8 0z" fill="#ea5a24" />
          <path d="M20 11.500q4 2.500 9-.5l-2 8q-5 2.500-9 .5z" fill="#86c440" />
          <path d="M8.500 20.500q4-2 8 0l-2 7.500q-4-2.500-8 0z" fill="#3f9be8" />
          <path d="M17.500 21q4 2.500 9 0l-2 7.500q-5 3-9 .5z" fill="#fdc931" />
        </svg>
      </button>
      <button type="button" aria-label="인터넷" className={`${TASK_BUTTON} w-[51px]`}>
        <svg width="32" height="34" viewBox="0 0 32 34" fill="none">
          <path d="M26.500 22.500A10.500 10.500 0 1 1 27 17.500H8" stroke="#1c83cc" strokeWidth="6.5" />
          <path d="M26 23A10.300 10.300 0 1 1 26.800 17.500H8" stroke="#55c5f4" strokeWidth="4.5" />
          <path d="M9 14q3-6 9-6" stroke="#b8ecff" strokeWidth="2" />
          <path d="M29 10q3-8-4-8Q15 4 6 16T4 30q4 3 11-2" stroke="#f2b91c" strokeWidth="2.5" />
        </svg>
      </button>
      <span className="h-full w-1 border-r border-[#6c809b] bg-[#c6d4e5]" />
      <span className="mr-0.5 h-full w-1 border-r border-[#6c809b] bg-[#b7c8dd]" />
      <button type="button" aria-label="탐색기" className={`${TASK_BUTTON} w-[59px]`}>
        <svg width="34" height="32" viewBox="0 0 34 32">
          <path d="M2 3q0-1 1-1h8l2 2h17q2 0 2 2v20H2z" fill="#e9cf79" stroke="#b9983f" />
          <path d="M5 2h5v3H5z" fill="#2ea84b" />
          <path d="M14 4h5v3h-5z" fill="#d1452f" />
          <path d="M22 5h5v3h-5z" fill="#3d82d6" />
          <path d="M2 8h12l2-1.500h16V28H2z" fill="#f7e6a1" stroke="#ceb35c" />
          <path d="M6 31V21q0-2 2-2h19q2 0 2 2v10h-5v-6H11v6z" fill="#a4daf4" stroke="#4ea0cf" />
          <path d="M9 12v9M4.500 16.500h9" stroke="#fff" strokeWidth="1.5" />
        </svg>
      </button>
      <button type="button" aria-label="크롬" className="ml-[18px]">
        <svg width="30" height="30" viewBox="0 0 30 30">
          <path d="M15 .5a14.500 14.500 0 0 1 12.560 7.250H15L8.700 18.600 2.440 7.750A14.500 14.500 0 0 1 15 .5z" fill="#dc4437" />
          <path d="M2.440 7.750L8.700 18.600 15 22.200l3-.5-4.200 7.750A14.500 14.500 0 0 1 2.440 7.750z" fill="#1ba05d" />
          <path d="M27.560 7.750A14.500 14.500 0 0 1 13.800 29.450L21.300 18.600V11.400L15 7.750z" fill="#fdce45" />
          <circle cx="15" cy="15" r="7" fill="#f4f6f8" />
          <circle cx="15" cy="15" r="5.5" fill="#4387f3" />
        </svg>
      </button>
      <button type="button" aria-label="엑셀" className={`${TASK_BUTTON} ml-[18px] w-[59px]`}>
        <svg width="32" height="32" viewBox="0 0 32 32">
          <path d="M6 1h23v26H2V6q0-4 4-5z" fill="#f3f8ee" stroke="#55a02c" strokeWidth="2" />
          <path d="M4 9l27 2v19L4 28z" fill="#fafcf8" stroke="#9aa794" />
          <path d="M22 10h7v4h-7zM22 16h7v4h-7zM22 22h7v5h-7zM14 22h6v5h-6zM6 22h6v4H6z" fill="#58a135" />
          <path d="M6 9h4l3 4 3-4h4l-5 6 5 6h-5l-3-3-3 3H5l5-6z" fill="#1d5c22" />
        </svg>
      </button>
      <div className="flex-1" />
      <div className="flex items-center text-white">
        <svg width="20" height="18" viewBox="0 0 20 18">
          <circle cx="8" cy="8" r="7.5" fill="#4f93cc" stroke="#c9dcec" strokeWidth="0.5" />
          <path d="M2 5q4-5 8-4l1 3-4 2 3 4-4 4q-4-2-4-9z" fill="#5db04a" />
          <path d="M9 16l8-9 3 2-8 8z" fill="#f1c34d" stroke="#fff" strokeWidth="0.7" />
        </svg>
        <span className="ml-0.5 flex gap-0.5 pb-1 text-lg leading-6 whitespace-nowrap">
          <span>가</span>
          <span>漢</span>
        </span>
        <button type="button" aria-label="숨겨진 아이콘" className="ml-3">
          <Caret className="rotate-180" />
        </button>
        <svg width="17" height="18" viewBox="0 0 17 18" className="ml-3">
          <path d="M1.500 1v16" stroke="#fff" strokeWidth="2" />
          <path d="M3 2q4-2 6 .5T14 3v7q-3 1-5-.5T3 10z" fill="#fff" stroke="#4b5563" strokeWidth="0.7" />
          <circle cx="12" cy="13" r="4.5" fill="#d9302c" stroke="#fff" strokeWidth="0.7" />
          <path d="M10 11l4 4M14 11l-4 4" stroke="#fff" strokeWidth="1.5" />
        </svg>
        <svg width="17" height="17" viewBox="0 0 17 17" fill="none" className="ml-2">
          <path d="M6 4.500h10v8H5v-6" fill="#6c7c92" stroke="#fff" strokeWidth="1.5" />
          <path d="M7 15.500h8M11 13v3" stroke="#fff" strokeWidth="1.5" />
          <path d="M1 1v4h4V1M3 5v9h3" stroke="#fff" strokeWidth="1.5" />
        </svg>
        <svg width="18" height="17" viewBox="0 0 18 17" fill="none" className="ml-2">
          <path d="M1 6h3l4-4v13l-4-4H1z" fill="#fff" stroke="#3f4b5d" strokeWidth="0.7" />
          <path d="M10.500 6q1.500 2.500 0 5M13 4q3 4.500 0 9M15.500 2.500q4 6 0 12" stroke="#fff" strokeWidth="1.2" />
        </svg>
      </div>
      <div className="mr-3 ml-[17px] text-center font-['Liberation_Sans','Noto_Sans_CJK_KR',sans-serif] text-[13px] leading-[17px] whitespace-nowrap text-white">
        <div>오후 4:00</div>
        <div>2018-07-09</div>
      </div>
      <button type="button" aria-label="바탕 화면 보기" className="h-full w-3.5 border border-[#4b5a6e] bg-[linear-gradient(135deg,#8e9eb3,#5f7087)]" />
    </div>
  );
}

export default function App() {
  const [tab, setTab] = useState("보기");
  const [sheet, setSheet] = useState("6월2주");

  return (
    <div className="relative flex h-screen flex-col overflow-hidden bg-[#b5cfee] font-['Noto_Sans_CJK_KR',sans-serif]">
      <TitleBar />
      <TabBar active={tab} onSelect={setTab} />
      <button type="button" aria-label="Office 단추" className="absolute top-0.5 left-px z-10">
        <OfficeLogo />
      </button>
      <Ribbon />
      <FormulaBar />
      <main className="flex min-h-0 flex-1 border-t border-[#6a93c4]">
        <div className="min-w-0 flex-1 overflow-hidden bg-white">
          <Sheet />
        </div>
        <VerticalScroll />
      </main>
      <SheetTabs active={sheet} onSelect={setSheet} />
      <StatusBar />
      <Taskbar />
    </div>
  );
}
